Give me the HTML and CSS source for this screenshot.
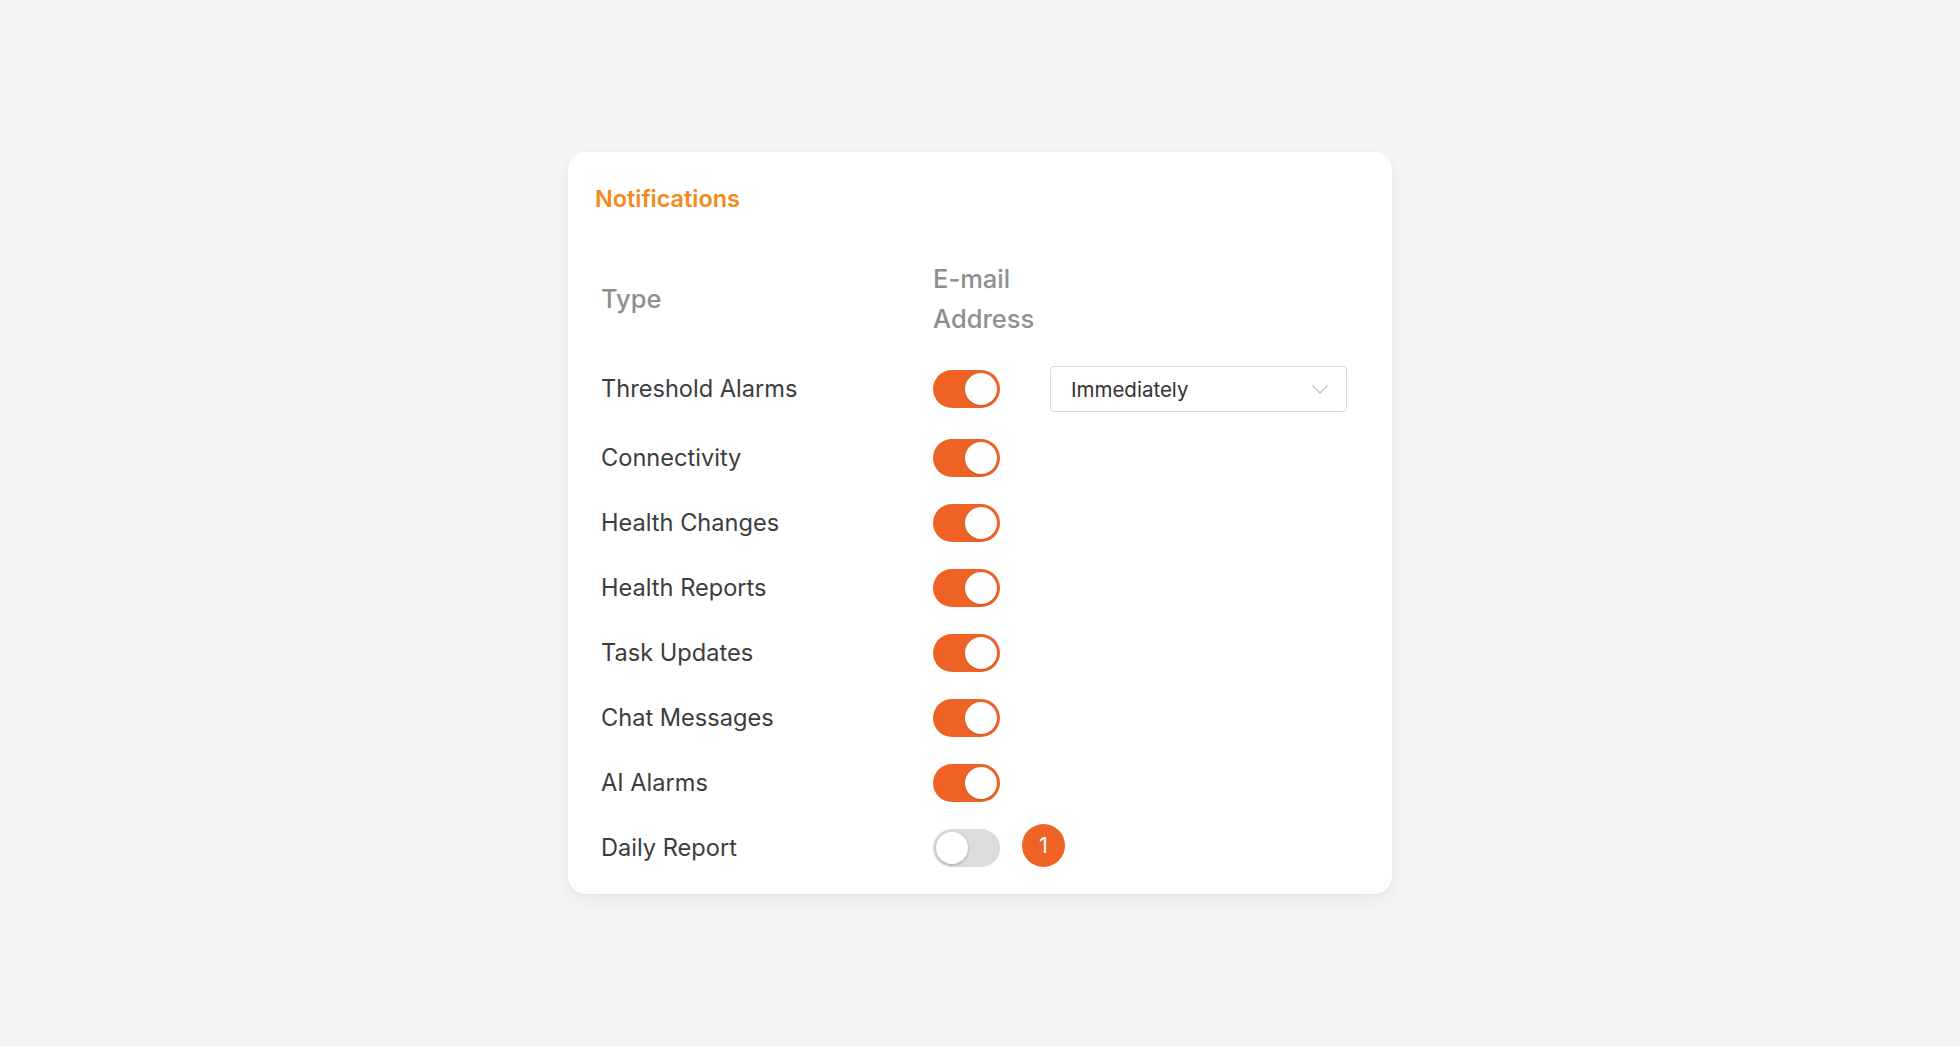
FILE: index.html
```html
<!DOCTYPE html>
<html lang="en">
<head>
<meta charset="utf-8">
<title>Notifications</title>
<link rel="stylesheet" href="styles.css">
</head>
<body>
<main class="card">
  <h2 class="card-title">Notifications</h2>
  <div class="grid">
    <div class="head head-type">Type</div>
    <div class="head head-email">E-mail Address</div>
    <div class="head"></div>

    <div class="label">Threshold Alarms</div>
    <div class="cell"><span class="toggle on"><span class="knob"></span></span></div>
    <div class="cell">
      <div class="select">
        <span class="select-value">Immediately</span>
        <svg class="chevron" width="16" height="9" viewBox="0 0 16 9"><path d="M1 1 L8 8 L15 1" fill="none" stroke="#bfbfbf" stroke-width="1.3" stroke-linecap="round" stroke-linejoin="round"/></svg>
      </div>
    </div>

    <div class="label">Connectivity</div>
    <div class="cell"><span class="toggle on"><span class="knob"></span></span></div>
    <div class="cell"></div>

    <div class="label">Health Changes</div>
    <div class="cell"><span class="toggle on"><span class="knob"></span></span></div>
    <div class="cell"></div>

    <div class="label">Health Reports</div>
    <div class="cell"><span class="toggle on"><span class="knob"></span></span></div>
    <div class="cell"></div>

    <div class="label">Task Updates</div>
    <div class="cell"><span class="toggle on"><span class="knob"></span></span></div>
    <div class="cell"></div>

    <div class="label">Chat Messages</div>
    <div class="cell"><span class="toggle on"><span class="knob"></span></span></div>
    <div class="cell"></div>

    <div class="label">AI Alarms</div>
    <div class="cell"><span class="toggle on"><span class="knob"></span></span></div>
    <div class="cell"></div>

    <div class="label">Daily Report</div>
    <div class="cell cell-badge"><span class="toggle"><span class="knob"></span></span><span class="badge">1</span></div>
    <div class="cell"></div>
  </div>
</main>
</body>
</html>
```

FILE: styles.css
```css
* { box-sizing: border-box; }
html, body { margin: 0; padding: 0; }
body {
  background: #f5f5f5;
  font-family: Inter, "Noto Sans", "Liberation Sans", sans-serif;
  height: 100vh;
  display: flex;
  align-items: center;
  justify-content: center;
}
.card {
  width: 824px;
  background: #ffffff;
  border-radius: 18px;
  box-shadow: 0 6px 18px rgba(0, 0, 0, 0.06), 0 1px 3px rgba(0, 0, 0, 0.03);
  padding: 32px 27px 27px 27px;
}
.card-title {
  margin: 0 0 45px 0;
  font-size: 23.4px;
  line-height: 30px;
  font-weight: 600;
  color: #f28a1c;
}
.grid {
  margin-left: 6px;
  display: grid;
  grid-template-columns: 332px 117px 1fr;
  row-gap: 27px;
  align-items: center;
}
.head {
  font-size: 25.5px;
  line-height: 40px;
  font-weight: 500;
  color: #8f8f8f;
}
.head-email { width: 112px; }
.label {
  font-size: 23.6px;
  line-height: 30px;
  color: #3d3d3d;
}
.cell { display: flex; align-items: center; }
.cell-badge { position: relative; }
.toggle {
  position: relative;
  display: block;
  width: 67px;
  height: 38px;
  border-radius: 19px;
  background: #dcdcdc;
}
.toggle.on { background: #ee6325; }
.knob {
  position: absolute;
  top: 3px;
  left: 3px;
  width: 32px;
  height: 32px;
  border-radius: 50%;
  background: #ffffff;
  box-shadow: 0 1px 3px rgba(0, 0, 0, 0.25);
}
.toggle.on .knob { left: 32px; box-shadow: 0 1px 2px rgba(0, 0, 0, 0.12); }
.badge {
  position: absolute;
  left: 89px;
  top: 50%;
  margin-top: -24px;
  width: 43px;
  height: 43px;
  border-radius: 50%;
  background: #ee6325;
  color: #ffffff;
  font-size: 22px;
  line-height: 43px;
  text-align: center;
  font-weight: 400;
}
.select {
  width: 297px;
  height: 46px;
  border: 1px solid #dadada;
  border-radius: 4px;
  display: flex;
  align-items: center;
  justify-content: space-between;
  padding: 0 18px 0 20px;
}
.select-value {
  font-size: 20.5px;
  color: #333333;
}
.chevron { display: block; }
```
